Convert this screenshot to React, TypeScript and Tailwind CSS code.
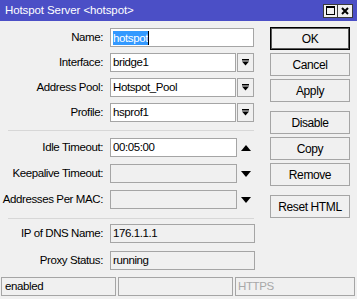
import { ReactNode } from 'react';

// dialog font, close to the winbox one
const ui = "font-['Liberation_Sans',Arial,sans-serif] text-[11.5px] tracking-[-0.4px]";

function DropIcon() {
  return (
    <svg width="7" height="7" viewBox="0 0 7 7">
      <rect x="0" y="0" width="7" height="1.5" fill="#000" />
      <polygon points="0,2.5 7,2.5 3.5,6.5" fill="#000" />
    </svg>
  );
}

function Tri({ up }: { up?: boolean }) {
  return (
    <svg width="10" height="6" viewBox="0 0 10 6">
      {up ? <polygon points="0,6 10,6 5,0" fill="#000" /> : <polygon points="0,0 10,0 5,6" fill="#000" />}
    </svg>
  );
}

function Row({ label, children, mt }: { label: string; children: ReactNode; mt: string }) {
  return (
    <div className={`flex h-[19px] items-center ${mt}`}>
      <div className="w-[103px] whitespace-nowrap text-right text-black">{label}</div>
      <div className="ml-[7px] flex h-full items-center">{children}</div>
    </div>
  );
}

function Field({ w, value, disabled }: { w: string; value?: ReactNode; disabled?: boolean }) {
  return (
    <div
      className={`flex h-[19px] items-center whitespace-nowrap border border-[#a5a5a5] pl-[2px] text-black ${w} ${
        disabled ? 'bg-[#f0f0f0]' : 'bg-white'
      }`}
    >
      {value}
    </div>
  );
}

function Select({ value, mt, label }: { value: string; mt: string; label: string }) {
  return (
    <Row label={label} mt={mt}>
      <Field w="w-[126px]" value={value} />
      <div className="ml-[1px] flex h-[19px] w-[17px] items-center justify-center border border-[#a5a5a5] bg-[#f0f0f0]">
        <DropIcon />
      </div>
    </Row>
  );
}

function Btn({ children, mt, def }: { children: ReactNode; mt?: string; def?: boolean }) {
  return (
    <div
      className={`flex h-[23px] w-[80px] items-center justify-center whitespace-nowrap bg-[#f0f0f0] text-[12px] text-black ${mt ?? ''} ${
        def ? 'border border-black shadow-[inset_0_0_0_1px_#5a5a5a]' : 'border border-[#a5a5a5]'
      }`}
    >
      {children}
    </div>
  );
}

export default function App() {
  return (
    <div className={`flex h-[299px] w-[357px] flex-col overflow-hidden bg-[#f0f0f0] ${ui}`}>
      {/* title bar */}
      <div className="flex h-[21px] items-center justify-between bg-[#4b4fc6] pl-[5px] pr-[4px]">
        <span className="text-[11.5px] tracking-[-0.1px] text-white">Hotspot Server &lt;hotspot&gt;</span>
        <div className="flex">
          <div className="flex h-[14px] w-[15px] items-center justify-center border border-[#3a3a3a] bg-[#f0f0f0]">
            <div className="h-[9px] w-[9px] border border-t-2 border-black" />
          </div>
          <div className="flex h-[14px] w-[15px] items-center justify-center border border-l-0 border-[#3a3a3a] bg-[#f0f0f0]">
            <svg width="8" height="8" viewBox="0 0 8 8">
              <path d="M1 1 L7 7 M7 1 L1 7" stroke="#000" strokeWidth="2" />
            </svg>
          </div>
        </div>
      </div>

      <div className="flex h-[256px]">
        {/* form */}
        <div className="flex w-[270px] flex-col pt-[7px]">
          <Row label="Name:" mt="">
            <Field
              w="w-[144px]"
              value={
                <>
                  <span className="bg-[#3399ff] leading-[14px] text-white">hotspot</span>
                  <span className="h-[14px] w-[1px] bg-black" />
                </>
              }
            />
          </Row>
          <Select label="Interface:" value="bridge1" mt="mt-[6px]" />
          <Select label="Address Pool:" value="Hotspot_Pool" mt="mt-[6px]" />
          <Select label="Profile:" value="hsprof1" mt="mt-[6px]" />

          <div className="ml-[8px] mt-[8px] h-[1px] w-[246px] bg-[#d7d7d7]" />

          <Row label="Idle Timeout:" mt="mt-[7px]">
            <Field w="w-[127px]" value="00:05:00" />
            <div className="ml-[4px]">
              <Tri up />
            </div>
          </Row>
          <Row label="Keepalive Timeout:" mt="mt-[7px]">
            <Field w="w-[127px]" disabled />
            <div className="ml-[4px]">
              <Tri />
            </div>
          </Row>
          <Row label="Addresses Per MAC:" mt="mt-[7px]">
            <Field w="w-[127px]" disabled />
            <div className="ml-[4px]">
              <Tri />
            </div>
          </Row>

          <div className="ml-[8px] mt-[9px] h-[1px] w-[246px] bg-[#d7d7d7]" />

          <Row label="IP of DNS Name:" mt="mt-[5px]">
            <Field w="w-[145px]" value="176.1.1.1" disabled />
          </Row>
          <Row label="Proxy Status:" mt="mt-[8px]">
            <Field w="w-[145px]" value="running" disabled />
          </Row>
        </div>

        {/* buttons */}
        <div className="flex flex-col gap-[3px] pt-[6px]">
          <Btn def>OK</Btn>
          <Btn>Cancel</Btn>
          <Btn>Apply</Btn>
          <Btn mt="mt-[6px]">Disable</Btn>
          <Btn>Copy</Btn>
          <Btn>Remove</Btn>
          <Btn mt="mt-[6px]">Reset HTML</Btn>
        </div>
      </div>

      {/* status bar */}
      <div className="flex h-[19px] gap-[2px] pl-[1px] pr-[2px]">
        <div className="flex w-[115px] items-center border border-[#a5a5a5] pl-[3px] text-black">enabled</div>
        <div className="w-[115px] border border-[#a5a5a5]" />
        <div className="flex flex-1 items-center border border-[#a5a5a5] pl-[2px] text-[#a8a8a8]">HTTPS</div>
      </div>
    </div>
  );
}
